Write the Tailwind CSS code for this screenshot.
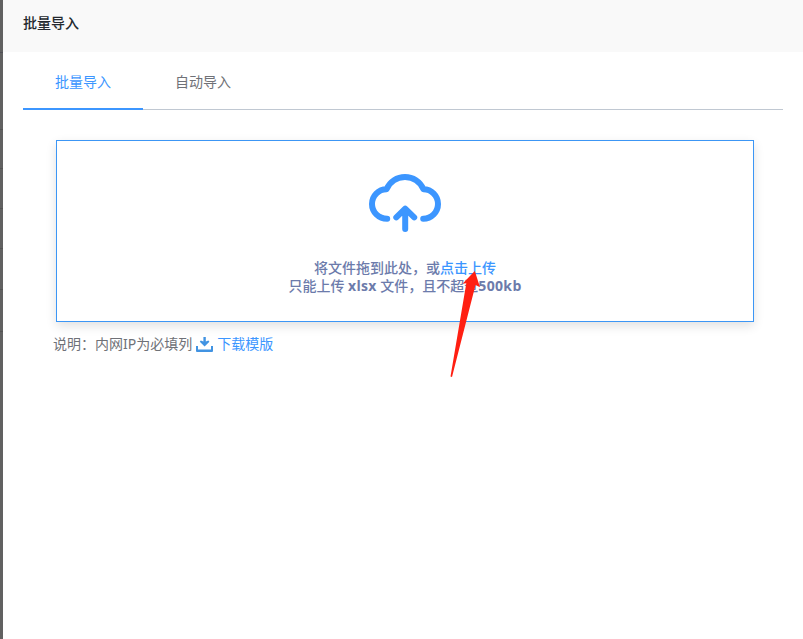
<!DOCTYPE html>
<html lang="zh-CN">
<head>
<meta charset="UTF-8">
<title>批量导入</title>
<script src="https://cdn.jsdelivr.net/npm/@tailwindcss/browser@4"></script>
</head>
<body class="flex h-[639px] w-[803px] overflow-hidden bg-white font-['Open_Sans','Noto_Sans_CJK_SC',sans-serif] text-sm text-[#6f7177]">
  <!-- Dimmed page edge behind the drawer -->
  <div class="flex w-[3px] shrink-0 flex-col bg-[#616161]">
    <i class="mt-[52px] h-px bg-[#505056]"></i>
    <i class="mt-[76px] h-px bg-[#545454]"></i>
    <i class="mt-[38px] h-px bg-[#545454]"></i>
    <i class="mt-[39px] h-px bg-[#545454]"></i>
    <i class="mt-[39px] h-px bg-[#545454]"></i>
    <i class="mt-[40px] h-px bg-[#545454]"></i>
    <i class="mt-[41px] h-px bg-[#545454]"></i>
  </div>
  <main class="flex min-w-0 flex-1 flex-col">
    <header class="flex h-[52px] items-start bg-[#f9f9f9] pt-[13px] pl-5">
      <h1 class="leading-5 font-medium text-[#24292f]">批量导入</h1>
    </header>
    <nav class="mr-5 ml-5 flex h-[58px] leading-5 shadow-[inset_0_-1px_#c0c8d2]">
      <a class="w-[120px] border-b-2 border-[#3c96ff] pt-5 text-center text-[#3c96ff]">批量导入</a>
      <a class="w-[120px] pt-5 text-center">自动导入</a>
    </nav>
    <section class="relative mt-[30px] ml-[53px] flex h-[182px] w-[698px] flex-col items-center border border-[#3c96f5] bg-white pt-[33px] shadow-[0_4px_10px_rgba(0,0,0,0.12)]">
      <svg class="h-[58px] w-[72px] shrink-0" viewBox="0 0 72 58" fill="none" stroke="#3c96ff" stroke-width="6" stroke-linecap="round" stroke-linejoin="round">
        <path d="M18.2 44.7C9.5 44.7 3 38 3 30C3 22 9.5 15.3 17.5 15.3C21 7.5 28 3 36 3C44 3 51 7.5 54.5 15.3C62.5 15.3 69 22 69 30C69 38 62.5 44.7 54.2 44.7"/>
        <path d="M36.2 35V55M27.3 43.3L36.2 34.6L45.2 43.3"/>
      </svg>
      <p class="mt-[27px] text-center leading-[18px] font-bold text-[#6c7bab]"><span class="font-medium">将文件拖到此处，或<a class="text-[#3c96ff]">点击上传</a></span><br><span class="font-medium">只能上传</span> <span class="tracking-[0.3px]">xlsx</span> <span class="font-medium">文件，且不超过</span><span class="tracking-[0.35px]">500kb</span></p>
      <svg class="absolute top-[130px] left-[392px] h-[108px] w-[34px]" viewBox="0 0 34 108" fill="#ff1f12">
        <path d="M25.8 0L31 16.2L26.5 14L3 106L1.5 105.5L17.3 12.3L13.5 12.8Z"/>
      </svg>
    </section>
    <div class="mt-3 ml-[50px] flex items-center leading-5">
      <span>说明：内网<span class="font-['Noto_Sans'] font-normal">IP</span>为必填列</span>
      <svg class="mx-1 h-[15px] w-[17px]" viewBox="0 0 17 15" fill="#4193e2">
        <path d="M0 9H2V12.6H15V9H17V14Q17 15 16 15H1Q0 15 0 14Z"/>
        <path d="M7.4 0H9.8V4.6L12.4 3.6L13.4 4.8L8.6 9.4L3.8 4.8L4.8 3.6L7.4 4.6Z"/>
      </svg>
      <a class="text-[#3c96ff]">下载模版</a>
    </div>
  </main>
</body>
</html>
